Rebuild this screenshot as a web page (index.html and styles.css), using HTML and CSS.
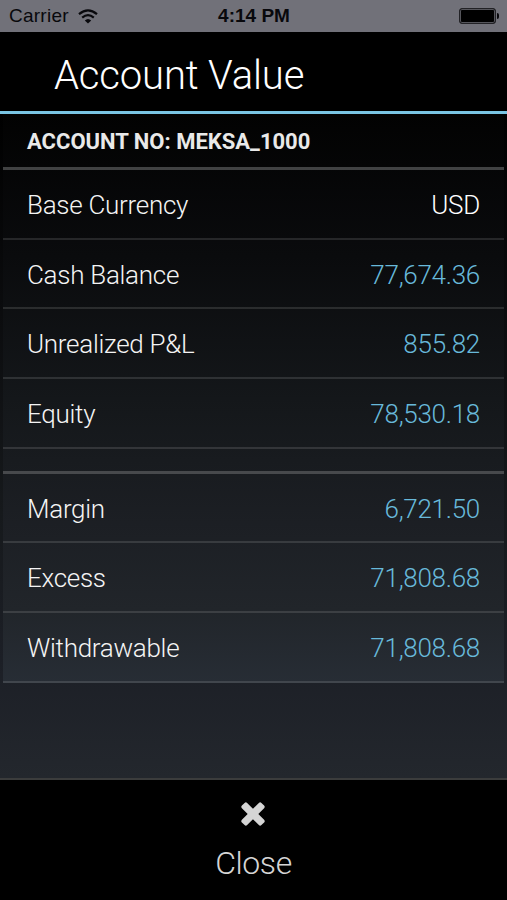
FILE: index.html
```html
<!DOCTYPE html>
<html lang="en">
<head>
    <meta charset="UTF-8">
    <meta name="viewport" content="width=device-width, initial-scale=1.0">
    <title>Account Value</title>
    <link rel="stylesheet" href="styles.css">
</head>
<body>
    <div class="status-bar">
        <div class="carrier">
            <span>Carrier</span>
            <svg class="wifi" viewBox="0 0 20 15" width="20" height="15">
                <path d="M1 5.2 Q10 -2.6 19 5.2" />
                <path d="M4.2 8.6 Q10 3.6 15.8 8.6" />
                <path class="dot" d="M6.8 11.4 Q10 8.4 13.2 11.4 L10 14.4 Z" />
            </svg>
        </div>
        <span class="time">4:14 PM</span>
        <div class="battery">
            <div class="battery-body"></div>
            <div class="battery-tip"></div>
        </div>
    </div>

    <header class="header">
        <h1>Account Value</h1>
    </header>

    <main class="content">
        <div class="account">
            <h2>ACCOUNT NO: MEKSA_1000</h2>
            <div class="row"><span>Base Currency</span><span class="currency">USD</span></div>
            <div class="row"><span>Cash Balance</span><span class="value">77,674.36</span></div>
            <div class="row"><span>Unrealized P&amp;L</span><span class="value">855.82</span></div>
            <div class="row"><span>Equity</span><span class="value">78,530.18</span></div>
            <div class="separator"></div>
            <div class="row"><span>Margin</span><span class="value">6,721.50</span></div>
            <div class="row"><span>Excess</span><span class="value">71,808.68</span></div>
            <div class="row"><span>Withdrawable</span><span class="value">71,808.68</span></div>
        </div>
    </main>

    <footer class="footer">
        <button class="close-btn">
            <svg viewBox="0 0 24 24" width="24" height="24">
                <g transform="rotate(45 12 12)">
                    <rect x="-1.8" y="8.3" width="27.6" height="7.4" rx="1.8" />
                    <rect x="8.3" y="-1.8" width="7.4" height="27.6" rx="1.8" />
                </g>
            </svg>
            <span>Close</span>
        </button>
    </footer>
</body>
</html>
```
FILE: styles.css
```css
* {
    box-sizing: border-box;
}
body {
    display: flex;
    flex-direction: column;
    height: 900px;
    margin: 0;
    background-color: #000;
    color: #f4f4f4;
    font-family: Roboto, sans-serif;
    font-weight: 300;
    overflow: hidden;
}
.status-bar {
    display: grid;
    grid-template-columns: 1fr auto 1fr;
    align-items: center;
    height: 32px;
    padding: 0 8px 0 9px;
    background-color: #717179;
    color: #08080c;
    font-family: "Liberation Sans", Arial, sans-serif;
    font-size: 19px;
    font-weight: 400;
}
.carrier {
    display: flex;
    align-items: center;
    gap: 9px;
    letter-spacing: 0.25px;
}
.wifi {
    fill: none;
    stroke: #08080c;
    stroke-width: 2.2;
}
.wifi .dot {
    fill: #08080c;
    stroke: none;
}
.time {
    font-weight: bold;
}
.battery {
    display: flex;
    align-items: center;
    justify-content: flex-end;
}
.battery-body {
    width: 37px;
    height: 16px;
    border: 1px solid #222226;
    border-radius: 3px;
    background-color: #000;
    box-shadow: inset 0 0 0 1px #55555b;
}
.battery-tip {
    width: 2px;
    height: 6px;
    margin-left: 1px;
    border-radius: 0 2px 2px 0;
    background-color: #08080c;
}
.header {
    height: 82px;
    padding-left: 54px;
    border-bottom: 3px solid #79c4e3;
}
.header h1 {
    margin: 0;
    color: #fff;
    font-size: 40px;
    font-weight: 300;
    letter-spacing: -0.15px;
    line-height: 87px;
}
.content {
    flex: 1;
    padding: 0 3px;
    background: linear-gradient(#000, #0b0c0e 30%, #16191c 60%, #1c1f26 82%, #23272d);
}
.account {
    background: linear-gradient(#020202, #0a0b0d 25%, #14171a 50%, #1c1f24 72%, #21252a 87%, #272d35);
}
.account h2 {
    height: 56px;
    margin: 0;
    padding-left: 24px;
    border-bottom: 3px solid #414243;
    color: #e9e9e9;
    font-size: 22px;
    font-weight: 700;
    line-height: 55px;
}
.row {
    display: flex;
    align-items: center;
    justify-content: space-between;
    height: 69.7px;
    padding: 2px 24px 0;
    border-bottom: 2px solid rgba(255, 255, 255, 0.12);
    font-size: 26px;
    letter-spacing: -0.28px;
}
.value {
    color: #68b9da;
}
.currency {
    color: #fff;
}
.separator {
    height: 25px;
    border-bottom: 3px solid #47494c;
}
.footer {
    height: 122px;
    border-top: 2px solid #3b3c3c;
    background-color: #000;
}
.close-btn {
    display: flex;
    flex-direction: column;
    align-items: center;
    width: 100%;
    padding: 22px 0 0;
    border: none;
    background: none;
    color: #d5d5d5;
    font-family: inherit;
    font-size: 32px;
    font-weight: 300;
    letter-spacing: -0.4px;
    line-height: 39px;
    cursor: pointer;
}
.close-btn svg {
    margin: 0 1px 18px 0;
    fill: #d5d5d5;
}
```
